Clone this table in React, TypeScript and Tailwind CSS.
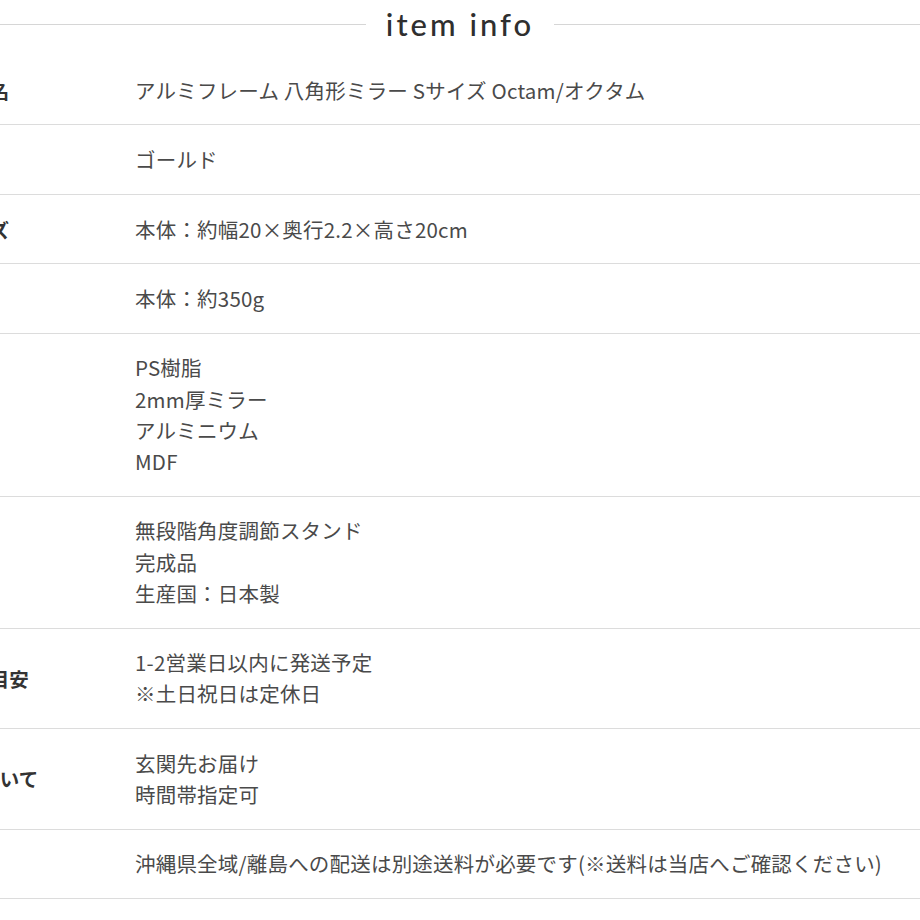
import React from "react";

const rows: { label: string; values: string[] }[] = [
  { label: "商品名", values: ["アルミフレーム 八角形ミラー Sサイズ Octam/オクタム"] },
  { label: "色", values: ["ゴールド"] },
  { label: "サイズ", values: ["本体：約幅20×奥行2.2×高さ20cm"] },
  { label: "重量", values: ["本体：約350g"] },
  { label: "素材", values: ["PS樹脂", "2mm厚ミラー", "アルミニウム", "MDF"] },
  { label: "仕様", values: ["無段階角度調節スタンド", "完成品", "生産国：日本製"] },
  { label: "発送の目安", values: ["1-2営業日以内に発送予定", "※土日祝日は定休日"] },
  { label: "配送について", values: ["玄関先お届け", "時間帯指定可"] },
  { label: "備考", values: ["沖縄県全域/離島への配送は別途送料が必要です(※送料は当店へご確認ください)"] },
];

export default function App() {
  return (
    <div
      className="w-[920px] h-[920px] overflow-hidden bg-white"
      style={{ fontFamily: '"Noto Sans CJK JP", "Noto Sans", sans-serif' }}
    >
      <div className="flex items-center h-[48px]">
        <div className="flex-1 h-px bg-[#d6d6d6]" />
        <div
          className="px-[20px] text-[31px] font-medium leading-[48px] tracking-[3px] text-[#2f2f2f]"
          style={{ fontFamily: '"Lato", "Noto Sans", sans-serif' }}
        >
          item info
        </div>
        <div className="flex-1 h-px bg-[#d6d6d6]" />
      </div>
      <div className="h-[8px]" />
      <div className="ml-[-165px] w-[1085px]">
        {rows.map((r) => (
          <div key={r.label} className="flex border-b border-[#dcdcdc]">
            <div className="w-[290px] shrink-0 flex items-center justify-center text-[19.5px] font-bold text-[#333]">
              {r.label}
            </div>
            <div className="flex-1 pl-[10px] py-[18.65px] text-[20.5px] leading-[31.17px] tracking-[0.2px] text-[#4a4a4a]">
              {r.values.map((v) => (
                <div key={v} className="whitespace-nowrap">{v}</div>
              ))}
            </div>
          </div>
        ))}
      </div>
    </div>
  );
}
